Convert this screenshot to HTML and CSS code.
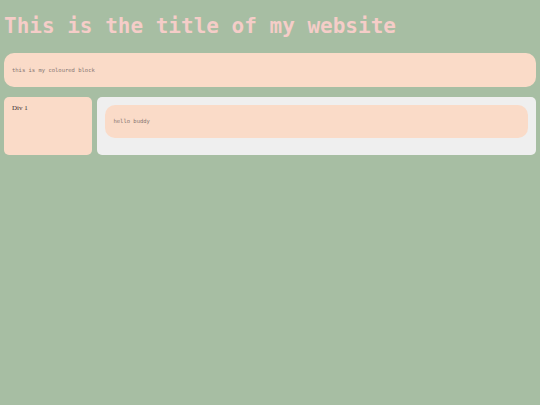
FILE: index.html
```html
<!DOCTYPE html>
<html>
<head>
<meta charset="utf-8">
<link rel="stylesheet" href="styles.css">
</head>
<body>
<h1 class="title">This is the title of my website</h1>
<div class="block">this is my coloured block</div>
<div class="row">
  <div class="side">Div 1</div>
  <div class="main">
    <div class="inner">hello buddy</div>
  </div>
</div>
</body>
</html>
```
FILE: styles.css
```css
html, body {
  margin: 0;
  padding: 0;
  background: #a7bea3;
}
body {
  padding: 0 4px;
}
.title {
  margin: 14px 0 14px;
  font-family: "DejaVu Sans Mono", monospace;
  font-weight: bold;
  font-size: 21px;
  line-height: 25px;
  color: #f5cdc8;
}
.block {
  height: 34px;
  box-sizing: border-box;
  padding: 0 8px;
  display: flex;
  align-items: center;
  background: #fadbc8;
  border-radius: 10px;
  font-family: "DejaVu Sans Mono", monospace;
  font-size: 5.5px;
  color: #857672;
}
.row {
  display: flex;
  gap: 4.5px;
  margin-top: 9.5px;
}
.side {
  width: 88px;
  flex: none;
  box-sizing: border-box;
  padding: 8px;
  background: #fadbc8;
  border-radius: 5px;
  font-family: "Liberation Serif", serif;
  font-size: 7px;
  line-height: 7px;
  color: #3a3030;
}
.main {
  flex: 1;
  padding: 8px 8px 17px;
  background: #efefef;
  border-radius: 5px;
}
.inner {
  height: 33px;
  box-sizing: border-box;
  padding: 0 9px;
  display: flex;
  align-items: center;
  background: #fadbc8;
  border-radius: 10px;
  font-family: "DejaVu Sans Mono", monospace;
  font-size: 5.5px;
  color: #857672;
}
```
